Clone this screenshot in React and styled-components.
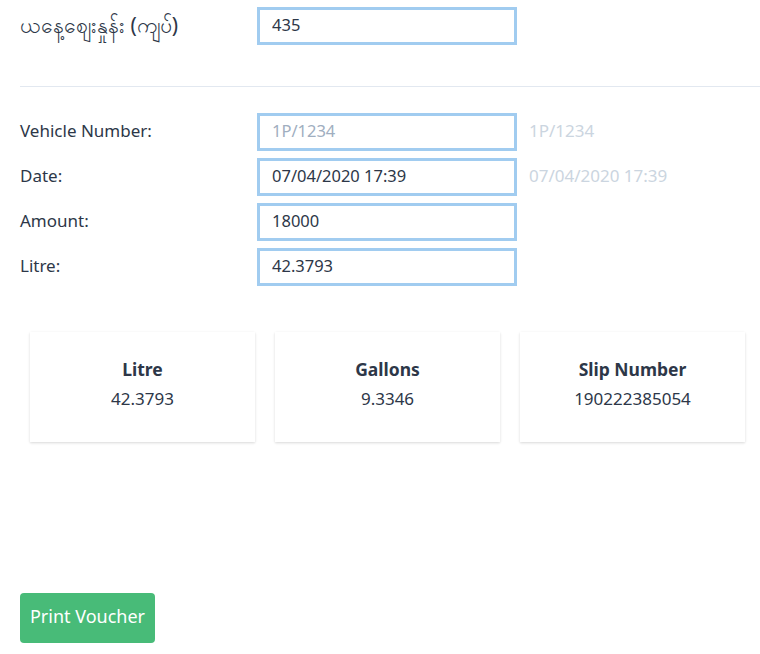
import styled, { createGlobalStyle } from 'styled-components'

const GlobalStyle = createGlobalStyle`
  body {
    margin: 0;
    background: #ffffff;
    font-family: 'Noto Sans', 'Open Sans', sans-serif;
    color: #2d3748;
  }
  * { box-sizing: border-box; }
`

const rows = [
  { label: 'Vehicle Number:', value: '1P/1234', hint: '1P/1234', placeholder: true },
  { label: 'Date:', value: '07/04/2020 17:39', hint: '07/04/2020 17:39' },
  { label: 'Amount:', value: '18000' },
  { label: 'Litre:', value: '42.3793' }
]

const cards = [
  { title: 'Litre', value: '42.3793' },
  { title: 'Gallons', value: '9.3346' },
  { title: 'Slip Number', value: '190222385054' }
]

export default function App() {
  return (
    <Page>
      <GlobalStyle />
      <TopRow>
        <Label $large>ယနေ့စျေးနှုန်း (ကျပ်)</Label>
        <Field defaultValue="435" />
      </TopRow>
      <Divider />
      <Form>
        {rows.map(row => (
          <Row key={row.label}>
            <Label>{row.label}</Label>
            {row.placeholder ? (
              <Field placeholder={row.value} />
            ) : (
              <Field defaultValue={row.value} />
            )}
            {row.hint && <Hint>{row.hint}</Hint>}
          </Row>
        ))}
      </Form>
      <Cards>
        {cards.map(card => (
          <Card key={card.title}>
            <CardTitle>{card.title}</CardTitle>
            <CardValue>{card.value}</CardValue>
          </Card>
        ))}
      </Cards>
      <PrintButton>Print Voucher</PrintButton>
    </Page>
  )
}

const Page = styled.div`
  width: 760px;
  height: 654px;
  padding: 10px 0 0 20px;
`

const TopRow = styled.div`
  display: flex;
  align-items: flex-start;
  height: 32px;
`

const Label = styled.span`
  width: 240px;
  flex-shrink: 0;
  padding-bottom: ${props => (props.$large ? '0' : '3px')};
  font-size: ${props => (props.$large ? '21px' : '17px')};
  line-height: ${props => (props.$large ? '30px' : '24px')};
  color: #2d3748;
`

const Field = styled.input`
  width: 254px;
  height: 32px;
  padding: 0 11px 3px;
  border: 1px solid #ffffff;
  border-radius: 0;
  box-shadow: 0 0 0 3px #a1ccf0;
  outline: none;
  font-family: inherit;
  font-size: 16.5px;
  color: #2d3748;
  background: #ffffff;

  &::placeholder {
    color: #a0aec0;
  }
`

const Divider = styled.hr`
  margin: 44px 0 29px;
  border: none;
  border-top: 1px solid #e2e8f0;
`

const Form = styled.div`
  display: flex;
  flex-direction: column;
  gap: 13px;
`

const Row = styled.div`
  display: flex;
  align-items: center;
  height: 32px;
`

const Hint = styled.span`
  margin-left: 15px;
  padding-bottom: 3px;
  font-size: 17px;
  color: #cbd5e0;
`

const Cards = styled.div`
  display: flex;
  gap: 20px;
  margin: 49px 0 0 10px;
`

const Card = styled.div`
  width: 225px;
  height: 110px;
  display: flex;
  flex-direction: column;
  align-items: center;
  padding-top: 25px;
  background: #ffffff;
  box-shadow: 0 1px 3px 0 rgba(0, 0, 0, 0.1), 0 1px 2px 0 rgba(0, 0, 0, 0.06);
`

const CardTitle = styled.div`
  font-size: 17.5px;
  font-weight: 700;
  color: #2d3748;
  line-height: 24px;
`

const CardValue = styled.div`
  margin-top: 6px;
  font-size: 17px;
  color: #2d3748;
  line-height: 24px;
`

const PrintButton = styled.button`
  margin-top: 151px;
  width: 135px;
  height: 50px;
  padding: 0 0 5px;
  border: none;
  border-radius: 4px;
  background: #48bb78;
  color: #ffffff;
  font-family: inherit;
  font-size: 18px;
  cursor: pointer;
`
